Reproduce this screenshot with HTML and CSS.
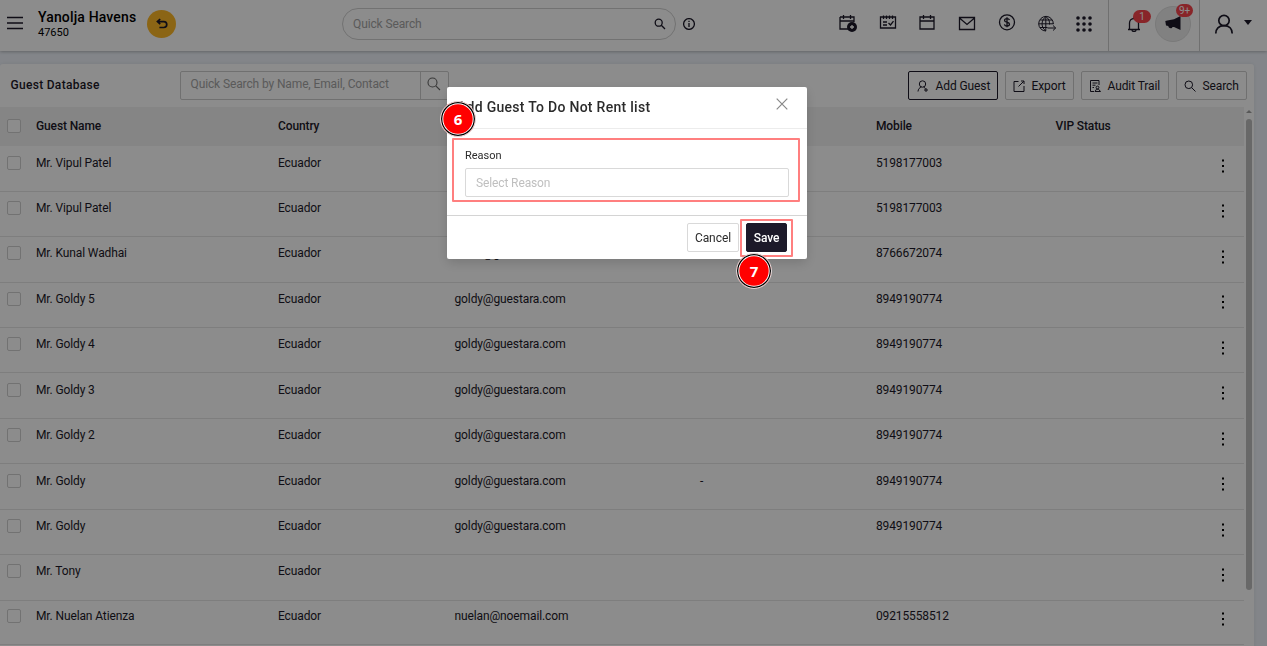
FILE: index.html
```html
<!DOCTYPE html>
<html lang="en">

<head>
    <meta charset="UTF-8">
    <meta name="viewport" content="width=device-width, initial-scale=1.0">
    <title>Guest Database</title>
    <link rel="stylesheet" href="styles.css">
</head>

<body>
    <header class="topbar">
        <svg class="menu" width="16" height="14" viewBox="0 0 16 14"><path d="M0 1.5h16M0 7h16M0 12.5h16" /></svg>
        <div class="property">
            <strong>Yanolja Havens</strong>
            <span>47650</span>
        </div>
        <div class="back">
            <svg width="12" height="12" viewBox="0 0 12 12"><path d="M4.2 1L1.4 3.6l2.8 2.6M1.6 3.6h6.2a2.9 2.9 0 0 1 0 5.9H3.4" /></svg>
        </div>
        <div class="quick">
            <span>Quick Search</span>
            <svg width="12" height="12" viewBox="0 0 12 12"><circle cx="4.7" cy="4.7" r="3.5" /><path d="M7.3 7.3L11 11" /></svg>
        </div>
        <svg class="info" width="12" height="12" viewBox="0 0 12 12"><circle cx="6" cy="6" r="5.4" /><path d="M6 5v4M6 2.8v1.2" /></svg>
        <nav class="tools">
            <svg width="18" height="18" viewBox="0 0 18 18">
                <path d="M1 3h14v5M1 3v12h8M1 7h14M4.5 1v4M11.5 1v4" />
                <circle class="solid" cx="13" cy="13" r="5" />
                <path class="light" d="M13 11v4M11 13h4" />
            </svg>
            <svg width="18" height="18" viewBox="0 0 18 18">
                <path d="M1.500 3h15v11h-15zM4.500 1.500v3.500M7.500 1.500v3.500M10.500 1.500v3.500M13.500 1.500v3.500M4 8h4M4 11h4M9.500 9l2 2 3-3.800" />
            </svg>
            <svg width="18" height="18" viewBox="0 0 18 18"><path d="M2 3h14v12H2zM2 7h14M5.500 1v4M12.500 1v4" /></svg>
            <svg width="18" height="18" viewBox="0 0 18 18"><path d="M1.500 3.500h15v12h-15zM1.500 4L9 10.500 16.500 4" /></svg>
            <svg width="18" height="18" viewBox="0 0 18 18">
                <circle cx="9" cy="8.300" r="7.500" />
                <path d="M11.500 6.100C11 4.900 10 4.600 9 4.600c-1.300 0-2.400.6-2.400 1.800C6.600 8.900 11.500 7.500 11.500 10.300c0 1.200-1.200 1.800-2.500 1.800-1.200 0-2.300-.5-2.600-1.700M9 3.300v10" />
            </svg>
            <svg width="20" height="18" viewBox="0 0 20 18">
                <path class="fine" d="M9 17A7.300 7.300 0 1 1 16.300 10M8.800 2.500v14.300M1.500 9.800h15M3 6h12M3 13.500h7.500M8.800 2.500c-5 4-5 11 0 14.300M8.800 2.500c3 2 4 5 3.700 8M10.500 14h8M16 11.500l2.700 2.500-2.700 2.500" />
            </svg>
            <svg class="apps" width="16" height="16" viewBox="0 0 16 16">
                <circle cx="2" cy="2" r="1.800" /><circle cx="8" cy="2" r="1.800" /><circle cx="14" cy="2" r="1.800" />
                <circle cx="2" cy="8" r="1.800" /><circle cx="8" cy="8" r="1.800" /><circle cx="14" cy="8" r="1.800" />
                <circle cx="2" cy="14" r="1.800" /><circle cx="8" cy="14" r="1.800" /><circle cx="14" cy="14" r="1.800" />
            </svg>
        </nav>
        <div class="alerts">
            <div class="bell">
                <svg width="14" height="16" viewBox="0 0 14 16"><path d="M1 13.500h12M2.500 13.500V7a4.500 4.500 0 0 1 9 0v6.500M5 14c0 2 4 2 4 0M7 1v1.500" /></svg>
                <span class="badge">1</span>
            </div>
            <div class="news">
                <svg width="16" height="14" viewBox="0 0 16 14"><path d="M15.500 0v14L9 11H7.500C7 13 3.500 12.500 3.300 10L1 9.500.3 5l2-.5L9 3.300z" /></svg>
                <span class="badge">9+</span>
            </div>
        </div>
        <div class="account">
            <svg width="20" height="20" viewBox="0 0 20 20"><circle cx="10" cy="6.500" r="5.200" /><path d="M1.800 19.500c0-4.500 2.800-7.800 8.200-7.800s8.200 3.300 8.200 7.800" /></svg>
            <i class="caret"></i>
        </div>
    </header>

    <main class="panel">
        <div class="toolbar">
            <h1>Guest Database</h1>
            <div class="search">
                <span>Quick Search by Name, Email, Contact</span>
                <i><svg width="14" height="14" viewBox="0 0 14 14"><circle cx="5.500" cy="5.500" r="4.500" /><path d="M8.800 8.800L13 13" /></svg></i>
            </div>
            <div class="actions">
                <button class="btn primary"><svg width="12" height="12" viewBox="0 0 12 12"><circle cx="5.500" cy="4" r="3.200" /><path d="M1 11.500C1.200 9 2.500 7.500 4.500 7M6.500 7l2 1.500M7 10h4M9 8v4" /></svg>Add Guest</button>
                <button class="btn export"><svg width="12" height="12" viewBox="0 0 12 12"><path d="M5.500 1.500H1v10h10V6M5.500 6.500L10.800 1.200M8 1h3v3" /></svg>Export</button>
                <button class="btn audit"><svg width="12" height="12" viewBox="0 0 12 12"><path d="M5 11.500H1.500V.5h8.500V5M3.500 3h5M3.500 5.200h3M3.500 7.500h1.500" /><circle cx="8.500" cy="7.500" r="1.400" /><path d="M6 11.500h5.500L9.500 9.200h-2z" /></svg>Audit Trail</button>
                <button class="btn find"><svg width="12" height="12" viewBox="0 0 12 12"><circle cx="4.800" cy="4.800" r="3.800" /><path d="M7.600 7.600L11.500 11.500" /></svg>Search</button>
            </div>
        </div>
        <div class="table">
            <div class="row head">
                <i class="check"></i><span>Guest Name</span><span>Country</span><span>Email</span><span></span><span>Mobile</span><span>VIP Status</span><b></b>
            </div>
            <div class="row"><i class="check"></i><span>Mr. Vipul Patel</span><span>Ecuador</span><span></span><span></span><span>5198177003</span><span></span><b class="dots"></b></div>
            <div class="row"><i class="check"></i><span>Mr. Vipul Patel</span><span>Ecuador</span><span></span><span></span><span>5198177003</span><span></span><b class="dots"></b></div>
            <div class="row"><i class="check"></i><span>Mr. Kunal Wadhai</span><span>Ecuador</span><span>kunal@guestara.com</span><span></span><span>8766672074</span><span></span><b class="dots"></b></div>
            <div class="row"><i class="check"></i><span>Mr. Goldy 5</span><span>Ecuador</span><span>goldy@guestara.com</span><span></span><span>8949190774</span><span></span><b class="dots"></b></div>
            <div class="row"><i class="check"></i><span>Mr. Goldy 4</span><span>Ecuador</span><span>goldy@guestara.com</span><span></span><span>8949190774</span><span></span><b class="dots"></b></div>
            <div class="row"><i class="check"></i><span>Mr. Goldy 3</span><span>Ecuador</span><span>goldy@guestara.com</span><span></span><span>8949190774</span><span></span><b class="dots"></b></div>
            <div class="row"><i class="check"></i><span>Mr. Goldy 2</span><span>Ecuador</span><span>goldy@guestara.com</span><span></span><span>8949190774</span><span></span><b class="dots"></b></div>
            <div class="row"><i class="check"></i><span>Mr. Goldy</span><span>Ecuador</span><span>goldy@guestara.com</span><span>-</span><span>8949190774</span><span></span><b class="dots"></b></div>
            <div class="row"><i class="check"></i><span>Mr. Goldy</span><span>Ecuador</span><span>goldy@guestara.com</span><span></span><span>8949190774</span><span></span><b class="dots"></b></div>
            <div class="row"><i class="check"></i><span>Mr. Tony</span><span>Ecuador</span><span></span><span></span><span></span><span></span><b class="dots"></b></div>
            <div class="row last"><i class="check"></i><span>Mr. Nuelan Atienza</span><span>Ecuador</span><span>nuelan@noemail.com</span><span></span><span>09215558512</span><span></span><b class="dots"></b></div>
            <div class="scroll"><i class="up"></i><i class="thumb"></i></div>
        </div>
    </main>

    <div class="overlay"></div>

    <div class="modal">
        <div class="modal-head">
            <h2>Add Guest To Do Not Rent list</h2>
            <svg width="12" height="12" viewBox="0 0 12 12"><path d="M.7.7l10.600 10.600M11.300.7L.7 11.300" /></svg>
        </div>
        <div class="modal-body">
            <label>Reason</label>
            <div class="select">Select Reason</div>
        </div>
        <div class="modal-foot">
            <button class="cancel">Cancel</button>
            <button class="save">Save</button>
        </div>
        <!-- step markers -->
        <div class="mark mark-reason"></div>
        <div class="mark mark-save"></div>
        <div class="step step-6">6</div>
        <div class="step step-7">7</div>
    </div>
</body>

</html>
```

FILE: styles.css
```css
* {
    margin: 0;
    padding: 0;
    box-sizing: border-box;
}

body {
    width: 100vw;
    height: 100vh;
    overflow: hidden;
    background: #eff3fa;
    font-family: Roboto, "Liberation Sans", sans-serif;
    font-size: 12px;
    letter-spacing: -.12px;
    color: #1c1929;
}

svg {
    display: block;
    flex: none;
    fill: none;
    stroke: #1c1929;
    stroke-width: 1.3;
}

/* top bar */
.topbar {
    position: relative;
    display: flex;
    height: 51px;
    background: #fff;
    box-shadow: 0 1px 3px rgba(0, 0, 0, .25);
}

.menu {
    margin: 16px 0 0 7px;
    stroke-width: 1.5;
}

.property {
    width: 109px;
    margin: 8px 0 0 15px;
    white-space: nowrap;
    color: #000;
}

.property strong {
    display: block;
    font-size: 14px;
    font-weight: 500;
    line-height: 18px;
    letter-spacing: .15px;
}

.property span {
    display: block;
    font-size: 11px;
    line-height: 13px;
    letter-spacing: 0;
}

.back {
    display: flex;
    align-items: center;
    justify-content: center;
    width: 29px;
    height: 28px;
    margin-top: 10px;
    border-radius: 50%;
    background: #fdb827;
}

.back svg {
    stroke-width: 1.7;
}

.quick {
    display: flex;
    align-items: center;
    justify-content: space-between;
    width: 334px;
    height: 32px;
    margin: 8px 0 0 166px;
    padding: 0 9px 0 10px;
    border: 1px solid #d0d0d0;
    border-radius: 16px;
    color: #a5a5a5;
}

.info {
    margin: 18px 0 0 7px;
}

.tools {
    display: flex;
    gap: 21.700px;
    width: 252px;
    margin: 14px 0 0 144px;
}

.tools .solid {
    fill: #1c1929;
    stroke: none;
}

.tools .light {
    stroke: #fff;
}

.tools .fine {
    stroke-width: 1;
}

.tools .apps {
    margin: 2px 0 0 -3px;
    fill: #1c1929;
    stroke: none;
}

.alerts {
    display: flex;
    width: 92px;
    margin-left: 17px;
    border-left: 1px solid #ccc;
    border-right: 1px solid #ccc;
}

.bell {
    position: relative;
    margin: 16px 0 0 18px;
}

.news {
    position: relative;
    display: flex;
    align-items: center;
    justify-content: center;
    width: 36px;
    height: 36px;
    margin: 6px 0 0 14px;
    border: 1px solid #ddd;
    border-radius: 50%;
    background: #ececec;
}

.news svg {
    margin-top: -3px;
    fill: #1c1929;
    stroke: none;
}

.badge {
    position: absolute;
    height: 13px;
    border-radius: 7px;
    background: #f8444b;
    color: #fff;
    font-size: 10px;
    line-height: 13px;
    text-align: center;
}

.bell .badge {
    top: -6px;
    left: 6px;
    width: 18px;
}

.news .badge {
    top: -3px;
    left: 20px;
    width: 17px;
}

.account {
    display: flex;
    margin: 14px 0 0 14px;
}

.account svg {
    stroke-width: 1.7;
}

.caret {
    margin: 6px 0 0 10px;
    width: 8px;
    height: 5px;
    background: #1c1929;
    clip-path: polygon(0 0, 100% 0, 50% 100%);
}

/* guest list */
.panel {
    width: 1254px;
    height: 600px;
    margin-top: 13px;
    background: #fff;
    border-radius: 3px;
    box-shadow: 0 0 4px rgba(0, 0, 0, .08);
}

.toolbar {
    display: flex;
    height: 43px;
    padding: 7px 7px 0 10.500px;
}

.toolbar h1 {
    width: 169.500px;
    font-size: 12px;
    font-weight: 500;
    line-height: 28px;
    letter-spacing: .3px;
}

.search {
    display: flex;
    width: 269px;
    height: 29px;
    border: 1px solid #ccc;
    border-radius: 2px;
    color: #a5a5a5;
    line-height: 25px;
    white-space: nowrap;
}

.search span {
    width: 239px;
    padding-left: 9.500px;
}

.search i {
    padding: 5px 0 0 6px;
    border-left: 1px solid #ccc;
}

.search svg {
    stroke: #666;
    stroke-width: 1.1;
}

.actions {
    display: flex;
    gap: 7px;
    margin-left: auto;
}

.btn {
    display: flex;
    align-items: center;
    gap: 6.500px;
    height: 29px;
    padding-left: 8px;
    border: 1px solid #ccc;
    border-radius: 2px;
    background: #fff;
    color: #1c1929;
    font: inherit;
    letter-spacing: -.1px;
    white-space: nowrap;
}

.btn svg {
    stroke-width: 1;
}

.primary {
    width: 90px;
    border-color: #1c1929;
}

.export {
    width: 69px;
    padding-left: 7px;
}

.audit {
    width: 88px;
    padding-left: 7px;
}

.find {
    width: 71px;
    padding-left: 7px;
}

.table {
    position: relative;
}

.row {
    display: grid;
    grid-template-columns: 29px 242px 176.500px 245.500px 176px 179.500px 162.500px 10px;
    width: 1244px;
    height: 45.450px;
    padding: 9.350px 0 0 7px;
    border-bottom: 1px solid #e6e6e6;
    line-height: 14px;
}

.head {
    height: 39.200px;
    padding-top: 12px;
    background: #f3f3f3;
    border: 0;
    font-weight: 500;
}

.last {
    height: 44.500px;
    padding-top: 8.300px;
}

.check {
    width: 14px;
    height: 14px;
    border: 1px solid #cfcfcf;
    border-radius: 2px;
    background: #fff;
}

.dots {
    width: 2px;
    height: 2px;
    margin: 9.500px 0 0 4px;
    background: #000;
    box-shadow: 0 -5.500px #000, 0 5.500px #000;
}

.scroll {
    position: absolute;
    top: 3px;
    left: 1246px;
    width: 6px;
}

.scroll .up {
    display: block;
    height: 3px;
    background: #a0a0a0;
    clip-path: polygon(50% 0, 100% 100%, 0 100%);
}

.scroll .thumb {
    display: block;
    height: 471px;
    margin-top: 6px;
    border-radius: 3px;
    background: #bdbdbd;
}

.overlay {
    position: fixed;
    inset: 0;
    background: rgba(0, 0, 0, .45);
}

/* dialog */
.modal {
    position: fixed;
    top: 87px;
    left: 447px;
    width: 360px;
    height: 172px;
    border-radius: 2px;
    background: #fff;
    box-shadow: 0 4px 12px rgba(0, 0, 0, .15);
    color: #2b2b2b;
}

.modal-head {
    display: flex;
    justify-content: space-between;
    height: 42px;
    padding: 11px 19px 0 10px;
    border-bottom: 1px solid #ececec;
}

.modal-head h2 {
    font-size: 14px;
    font-weight: 500;
    line-height: 18px;
    letter-spacing: .28px;
}

.modal-head svg {
    stroke: #888;
    stroke-width: 1.2;
}

.modal-body {
    height: 86px;
    padding: 20px 18px 0;
}

.modal-body label {
    display: block;
    height: 19px;
    font-size: 11px;
    line-height: 13px;
    letter-spacing: 0;
}

.select {
    height: 29px;
    padding-left: 10px;
    border: 1px solid #d9d9d9;
    border-radius: 2px;
    color: #bfbfbf;
    line-height: 28px;
}

.modal-foot {
    display: flex;
    gap: 7px;
    height: 44px;
    padding: 7px 0 0 240px;
    border-top: 1px solid #d4d4d4;
}

.modal-foot button {
    height: 29px;
    border: 1px solid #d9d9d9;
    border-radius: 2px;
    background: #fff;
    color: #2b2b2b;
    font: inherit;
    letter-spacing: -.05px;
}

.modal-foot .cancel {
    width: 52px;
}

.modal-foot .save {
    width: 41px;
    border-color: #1c1929;
    background: #1c1929;
    color: #fff;
    font-weight: 500;
    letter-spacing: -.1px;
}

.mark {
    position: absolute;
    border: 2px solid rgba(255, 0, 0, .5);
    border-radius: 1px;
}

.mark-reason {
    top: 51px;
    left: 5px;
    width: 348px;
    height: 64px;
}

.mark-save {
    top: 132px;
    left: 293px;
    width: 53px;
    height: 38px;
}

.step {
    position: absolute;
    width: 36px;
    height: 36px;
    border: 1px solid #ddd;
    border-radius: 50%;
    background: #f00;
    box-shadow: inset 0 0 0 1.300px #000, inset 0 0 0 2.300px #fff;
    color: #fff;
    font: bold 15px/35px "Open Sans", sans-serif;
    text-align: center;
}

.step-6 {
    top: 14px;
    left: -7px;
}

.step-7 {
    top: 166px;
    left: 289px;
}
```
